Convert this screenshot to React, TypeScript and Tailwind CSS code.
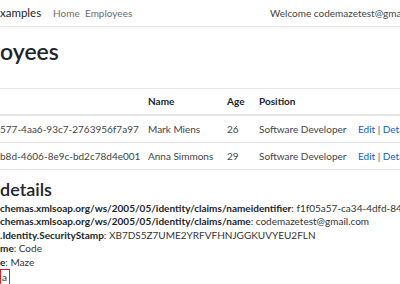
const font = { fontFamily: 'Lato, "Open Sans", sans-serif' };

const employees = [
  { id: "577-4aa6-93c7-2763956f7a97", name: "Mark Miens", age: 26, position: "Software Developer" },
  { id: "b8d-4606-8e9c-bd2c78d4e001", name: "Anna Simmons", age: 29, position: "Software Developer" },
];

const claims = [
  { k: "chemas.xmlsoap.org/ws/2005/05/identity/claims/nameidentifier", v: "f1f05a57-ca34-4dfd-842d-46984c0b5b1a" },
  { k: "chemas.xmlsoap.org/ws/2005/05/identity/claims/name", v: "codemazetest@gmail.com" },
  { k: ".Identity.SecurityStamp", v: "XB7DS5Z7UME2YRFVFHNJGGKUVYEU2FLN" },
  { k: "me", v: "Code" },
  { k: "e", v: "Maze" },
];

export default function App() {
  return (
    <div className="w-[400px] h-[284px] overflow-hidden bg-white text-[#212529] text-[10px]" style={font}>
      {/* Navbar */}
      <nav className="h-[27px] flex items-center border-b border-[#e5e5e5] shadow-[0_1px_3px_rgba(0,0,0,0.06)] whitespace-nowrap overflow-hidden">
        <span className="shrink-0 w-[53px] text-[11.5px] text-[#212529]">xamples</span>
        <span className="shrink-0 w-[32px] text-[#6c6c6c]">Home</span>
        <span className="shrink-0 w-[185px] text-[#6c6c6c]">Employees</span>
        <span className="shrink-0 text-[#444]">Welcome codemazetest@gmail.com</span>
      </nav>

      {/* Heading */}
      <h1 className="text-[23px] leading-none font-semibold mt-[13px] mb-[25px]">oyees</h1>

      {/* Table */}
      <div className="border-t border-[#e5e5e5] whitespace-nowrap">
        <div className="grid grid-cols-[148px_79px_32px_99px_1fr] h-[27px] items-center font-bold border-b-2 border-[#e5e5e5]">
          <span></span>
          <span>Name</span>
          <span>Age</span>
          <span>Position</span>
          <span></span>
        </div>
        {employees.map((e) => (
          <div key={e.id} className="grid grid-cols-[148px_79px_32px_99px_1fr] h-[27px] items-center border-b border-[#e5e5e5] text-[#444]">
            <span>{e.id}</span>
            <span>{e.name}</span>
            <span>{e.age}</span>
            <span>{e.position}</span>
            <span className="overflow-hidden">
              <span className="text-[#0366d6]">Edit</span> | <span className="text-[#0366d6]">Details</span>
            </span>
          </div>
        ))}
      </div>

      {/* Claims */}
      <h2 className="text-[18px] leading-none font-semibold mt-[10px] mb-[4px]">details</h2>
      <ul className="leading-[13.4px] whitespace-nowrap text-[#333]">
        {claims.map((c) => (
          <li key={c.k} className="overflow-hidden">
            <span className="font-bold text-[#212529]">{c.k}</span>: {c.v}
          </li>
        ))}
        <li>
          <span className="inline-block border border-[#e02020] pl-[1px] pr-[2px] leading-[14px]">a</span>
        </li>
      </ul>
    </div>
  );
}
